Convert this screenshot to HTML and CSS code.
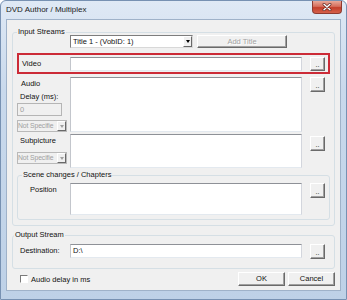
FILE: index.html
```html
<!DOCTYPE html>
<html lang="en">
<head>
<meta charset="UTF-8">
<title>DVD Author / Multiplex</title>
<link rel="stylesheet" href="styles.css">
</head>
<body>
<div class="window">
    <div class="titlebar">
        <span class="title">DVD Author / Multiplex</span>
        <span class="close">
            <svg width="10" height="8" viewBox="0 0 10 8">
                <path d="M2 1.2 L8 6.8 M8 1.2 L2 6.8" stroke="#5b1f19" stroke-width="2.8" stroke-linecap="round"/>
                <path d="M2 1.2 L8 6.8 M8 1.2 L2 6.8" stroke="#fff" stroke-width="1.5" stroke-linecap="round"/>
            </svg>
        </span>
    </div>
    <div class="client">
        <fieldset class="group">
            <legend>Input Streams</legend>
            <div class="title-row">
                <div class="combo">
                    <span class="combo-text">Title 1 - (VobID: 1)</span>
                    <span class="arrow"></span>
                </div>
                <div class="btn add disabled">Add Title</div>
            </div>

            <div class="row video">
                <span class="lbl mid">Video</span>
                <div class="field path"></div>
                <div class="btn browse">..</div>
            </div>

            <div class="row audio">
                <div class="side">
                    <span class="lbl">Audio</span>
                    <span class="lbl delay-lbl">Delay (ms):</span>
                    <div class="delay">0</div>
                    <div class="nsel">
                        <span class="nsel-text">Not Specifie</span>
                        <span class="arrow grey"></span>
                    </div>
                </div>
                <div class="field list-audio"></div>
                <div class="btn browse">..</div>
            </div>

            <div class="row sub">
                <div class="side">
                    <span class="lbl">Subpicture</span>
                    <div class="nsel sub-sel">
                        <span class="nsel-text">Not Specifie</span>
                        <span class="arrow grey"></span>
                    </div>
                </div>
                <div class="field list-sub"></div>
                <div class="btn browse sub-btn">..</div>
            </div>

            <fieldset class="group scenes">
                <legend>Scene changes / Chapters</legend>
                <div class="row pos">
                    <span class="lbl pos-lbl">Position</span>
                    <div class="field list-pos"></div>
                    <div class="btn browse">..</div>
                </div>
            </fieldset>
        </fieldset>

        <fieldset class="group output">
            <legend>Output Stream</legend>
            <div class="row dest">
                <span class="lbl mid">Destination:</span>
                <div class="field path">D:\</div>
                <div class="btn browse">..</div>
            </div>
        </fieldset>

        <div class="footer">
            <span class="check"></span>
            <span class="check-lbl">Audio delay in ms</span>
            <div class="btn action">OK</div>
            <div class="btn action">Cancel</div>
        </div>
    </div>
</div>
</body>
</html>
```

FILE: styles.css
```css
body{
    margin:0;
    background:#fff;
}
.window{
    width:347px;
    height:300px;
    box-sizing:border-box;
    border:1px solid #7791b2;
    border-radius:6px 6px 0 0;
    padding:0 5px 7px;
    background:linear-gradient(#dfe9f5 0%,#c9d9ec 30%,#bed1e7 100%);
    font-family:"Liberation Sans",Arial,sans-serif;
    font-size:7.5px;
    color:#111;
}
.titlebar{
    height:18px;
    display:flex;
    justify-content:space-between;
    align-items:flex-start;
}
.title{
    font-size:8px;
    line-height:18px;
    color:#1b1b1b;
}
.close{
    width:30px;
    height:13px;
    margin-right:-1px;
    box-sizing:border-box;
    border:1px solid #8e3b31;
    border-top:none;
    border-radius:0 0 4px 4px;
    background:linear-gradient(#e9a99a 0%,#d66e5c 45%,#c43f2b 55%,#d4604a 100%);
    display:flex;
    align-items:center;
    justify-content:center;
}
.client{
    background:#f0f0f0;
    border:1px solid #9fb2c9;
    padding:8px 5px 4px;
}
.group{
    margin:0;
    min-width:0;
    border:1px solid #d5dfe5;
    border-radius:3px;
    padding:0 4px 5px;
}
legend{
    padding:0 1px;
    line-height:8px;
}
.title-row{
    display:flex;
    gap:4px;
    margin-top:-1px;
    padding-left:53px;
}
.combo{
    width:123px;
    height:13px;
    box-sizing:border-box;
    border:1px solid;
    border-color:#7d7d7d #d8d8d8 #d8d8d8 #7d7d7d;
    background:#fff;
    display:flex;
}
.combo-text{
    flex:1;
    line-height:11px;
    padding-left:2px;
}
.arrow{
    width:9px;
    box-sizing:border-box;
    border:1px solid;
    border-color:#fff #696969 #696969 #fff;
    background:#f0f0f0;
    display:flex;
    align-items:center;
    justify-content:center;
}
.arrow::after{
    content:"";
    border-left:2.5px solid transparent;
    border-right:2.5px solid transparent;
    border-top:3px solid #000;
}
.arrow.grey::after{border-top-color:#a0a0a0;}
.btn{
    box-sizing:border-box;
    border:1px solid;
    border-color:#fff #6a6a6a #6a6a6a #fff;
    box-shadow:inset -1px -1px #a0a0a0;
    background:#f0f0f0;
    text-align:center;
}
.add{
    width:90px;
    height:13px;
    line-height:11px;
}
.disabled{
    color:#a3a3a3;
    text-shadow:1px 1px #fff;
}
.row{
    display:grid;
    grid-template-columns:45px 232px 15px;
    column-gap:8px;
    align-items:start;
}
.lbl{
    padding-left:4px;
    line-height:9px;
    white-space:nowrap;
}
.lbl.mid{line-height:14px;padding-left:3px;}
.field{
    box-sizing:border-box;
    background:#fff;
    border:1px solid;
    border-color:#8e9197 #d3d6dd #e3e9ef #c3c6cc;
    padding-left:2px;
    line-height:12px;
}
.path{height:14px;}
.browse{
    width:15px;
    height:15px;
    font-size:7px;
    line-height:15px;
}
.video{
    grid-template-columns:43px 232px 15px;
    margin-top:5px;
    border:2px solid #cc2b37;
    padding:2px 0 1px;
}
.video .browse{height:14px;line-height:13px;}
.audio{margin-top:3px;}
.side{
    display:flex;
    flex-direction:column;
    align-items:flex-start;
    padding-top:2px;
}
.delay-lbl{margin-top:4px;padding-left:3px;}
.delay{
    width:45px;
    height:13px;
    box-sizing:border-box;
    margin-top:2px;
    border:1px solid #b5b5b5;
    color:#a0a0a0;
    padding-left:2px;
    line-height:11px;
}
.nsel{
    width:50px;
    height:12px;
    box-sizing:border-box;
    margin-top:4px;
    border:1px solid #b9b9b9;
    display:flex;
    color:#a0a0a0;
}
.nsel-text{
    flex:1;
    font-size:6.8px;
    line-height:10px;
    white-space:nowrap;
    letter-spacing:-0.1px;
}
.list-audio{height:55px;}
.sub{margin-top:2px;}
.sub .lbl{padding-left:3px;}
.sub-sel{margin-top:7px;}
.list-sub{height:34px;}
.sub-btn{margin-top:2px;}
.scenes{
    margin-top:3px;
    padding:0 4px 4px;
}
.pos{
    grid-template-columns:40px 232px 15px;
    margin-top:4px;
}
.pos-lbl{padding-left:8px;padding-top:2px;}
.list-pos{height:32px;}
.output{
    margin-top:5px;
    padding-bottom:9px;
}
.output legend{margin-left:-3px;}
.dest{margin-top:5px;}
.footer{
    display:flex;
    align-items:center;
    margin-top:3px;
}
.check{
    width:8px;
    height:8px;
    box-sizing:border-box;
    margin-left:8px;
    border:1px solid;
    border-color:#7a7a7a #fff #fff #7a7a7a;
    background:#fff;
}
.check-lbl{
    margin-left:3px;
    flex:1;
}
.action{
    width:47px;
    height:14px;
    line-height:12px;
    margin-left:3px;
}
```
